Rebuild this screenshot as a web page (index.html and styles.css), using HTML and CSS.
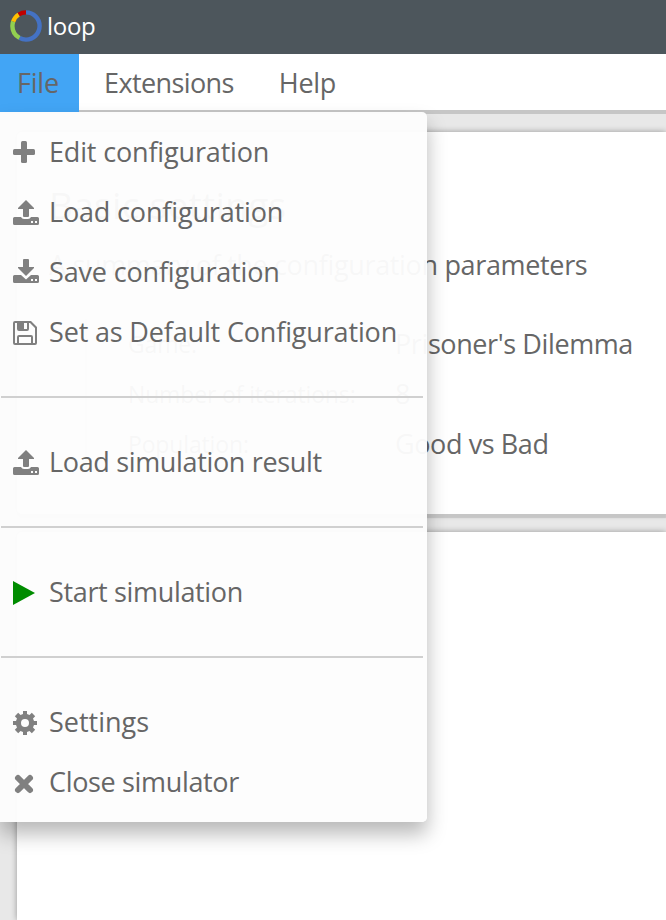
FILE: index.html
```html
<!DOCTYPE html>
<html lang="en">
<head>
<meta charset="utf-8">
<title>loop</title>
<link rel="stylesheet" href="styles.css">
</head>
<body>
<header class="titlebar">
  <svg class="logo" width="32" height="32" viewBox="0 0 32 32" fill="none" stroke-width="4.4">
    <circle cx="16" cy="16" r="13.6" stroke="#4472c4" pathLength="100" stroke-dasharray="58 42" stroke-dashoffset="25"/>
    <circle cx="16" cy="16" r="13.6" stroke="#92d050" pathLength="100" stroke-dasharray="22.500 77.500" stroke-dashoffset="-33"/>
    <circle cx="16" cy="16" r="13.6" stroke="#ffc000" pathLength="100" stroke-dasharray="10.500 89.500" stroke-dashoffset="-55.500"/>
    <circle cx="16" cy="16" r="13.6" stroke="#c00000" pathLength="100" stroke-dasharray="9 91" stroke-dashoffset="-66"/>
  </svg>
  <span class="brand">loop</span>
</header>
<nav class="menubar">
  <div class="tab tab-file active"><span>File</span>
    <div class="menu">
      <div class="item"><svg class="icon" viewBox="0 0 28 28"><rect x="0" y="11" width="22" height="6" rx="1.500"/><rect x="8" y="3" width="6" height="22" rx="1.500"/></svg><span class="snug">Edit configuration</span></div>
      <div class="item"><svg class="icon" viewBox="0 0 28 28"><path d="M13 2l8 8v1h-5v7q0 1-1 1h-4q-1 0-1-1v-7H5v-1z"/><path fill-rule="evenodd" d="M1.500 19H8q1 2 3 2h4q2 0 3-2h6.500q1.500 0 1.500 1.500v5q0 1.500-1.500 1.500h-23Q0 27 0 25.500v-5Q0 19 1.500 19zM18 23v2h2v-2zM22 23v2h2v-2z"/></svg><span class="snug">Load configuration</span></div>
      <div class="item"><svg class="icon" viewBox="0 0 28 28"><path d="M11 1h4q1 0 1 1v7h5v1l-8 8-8-8V9h5V2q0-1 1-1z"/><path fill-rule="evenodd" d="M1.500 17H8l5 4.500 5-4.500h6.500q1.500 0 1.500 1.500v5q0 1.500-1.500 1.500h-23Q0 25 0 23.500v-5Q0 17 1.500 17zM18 21v2h2v-2zM22 21v2h2v-2z"/></svg><span class="snug">Save configuration</span></div>
      <div class="item"><svg class="icon" viewBox="0 0 28 28"><path fill-rule="evenodd" d="M2 3h16l6 6v16q0 2-2 2H2q-2 0-2-2V5q0-2 2-2zM2 5v20h2v-6q0-2 2-2h12q2 0 2 2v6h2V10l-5-5h-1v6q0 2-2 2H6q-2 0-2-2V5zM11 5v6h3V5zM6 19v6h12v-6z"/></svg><span class="snug">Set as Default Configuration</span></div>
      <hr>
      <div class="item"><svg class="icon" viewBox="0 0 28 28"><path d="M13 2l8 8v1h-5v7q0 1-1 1h-4q-1 0-1-1v-7H5v-1z"/><path fill-rule="evenodd" d="M1.500 19H8q1 2 3 2h4q2 0 3-2h6.500q1.500 0 1.500 1.500v5q0 1.500-1.500 1.500h-23Q0 27 0 25.500v-5Q0 19 1.500 19zM18 23v2h2v-2zM22 23v2h2v-2z"/></svg><span class="tight">Load simulation result</span></div>
      <hr>
      <div class="item"><svg class="icon play" viewBox="0 0 28 28"><path d="M0 3l22 12L0 27z"/></svg><span class="tight">Start simulation</span></div>
      <hr>
      <div class="item"><svg class="icon" viewBox="0 0 28 28"><path fill-rule="evenodd" d="M10 3h4v3l2.500 1 2.300-2.200 3.400 3.400L20 10.500l1 2.500h3v4h-3l-1 2.500 2.200 2.300-3.400 3.400L16.500 23 14 24v3h-4v-3l-2.500-1-2.300 2.200-3.400-3.400L4 19.500 3 17H0v-4h3l1-2.500-2.200-2.300 3.400-3.400L7.500 7 10 6zM12 11a4 4 0 1 0 0 8a4 4 0 1 0 0-8z"/></svg><span>Settings</span></div>
      <div class="item"><svg class="icon cross" viewBox="0 0 28 28"><path d="M5 10l12 12M17 10L5 22"/></svg><span class="tight">Close simulator</span></div>
    </div>
  </div>
  <div class="tab"><span class="tab-label">Extensions</span></div>
  <div class="tab"><span class="tight">Help</span></div>
</nav>
<main class="page">
  <section class="card summary">
    <h1>Basic settings</h1>
    <p class="tight">A summary of the configuration parameters</p>
    <dl>
      <dt>Game:</dt><dd>Prisoner's Dilemma</dd>
      <dt>Number of iterations:</dt><dd>8</dd>
      <dt>Population:</dt><dd>Good vs Bad</dd>
    </dl>
  </section>
  <section class="card rest"></section>
</main>
</body>
</html>
```
FILE: styles.css
```css
* { box-sizing: border-box; }
body { margin: 0; width: 666px; height: 920px; overflow: hidden; display: flex; flex-direction: column; background: #e8e8e8; color: #666; font: 27px/40px "Open Sans", "Noto Sans", sans-serif; white-space: nowrap; }
.titlebar { height: 54px; flex: none; display: flex; align-items: center; padding: 0 0 3px 10px; background: #4d565c; color: #fff; }
.brand { margin-left: 5px; font-size: 24px; padding-top: 1px; letter-spacing: -.3px; }
.menubar { position: relative; z-index: 2; flex: none; display: flex; height: 58px; background: #fff; box-shadow: inset 0 -2px #c6c6c6, 0 2px #c6c6c6; }
.tab { padding: 9px 22px 0 23px; }
.tab-file { width: 79px; padding-left: 17px; margin-right: 2px; letter-spacing: -.2px; }
.tab-label { letter-spacing: -.6px; }
.active { background: #42a5f5; }
.menu { position: absolute; left: 0; top: 58px; width: 427px; height: 710px; padding: 10px 0; background: rgba(253, 253, 253, .96); border-radius: 0 5px 5px 0; box-shadow: 0 12px 20px rgba(0, 0, 0, .28); letter-spacing: 0; }
.item { height: 60px; display: flex; align-items: center; padding-left: 13px; }
.icon { width: 28px; height: 28px; margin-right: 8px; flex: none; fill: #808080; }
.play { fill: #008c00; }
.cross { fill: none; stroke: #808080; stroke-width: 6; stroke-linecap: round; }
.snug { letter-spacing: -.16px; }
.tight { letter-spacing: -.34px; }
hr { height: 2px; border: 0; margin: 34px 4px 34px 1px; background: #d0d0d0; }
.page { flex: 1; display: flex; flex-direction: column; gap: 18px; padding: 20px 0 0 17px; }
.card { background: #fff; border-radius: 5px 0 0 5px; box-shadow: 0 4px 1px #c6c6c6, 0 0 6px rgba(0, 0, 0, .35); }
.summary { height: 382px; padding: 46px 0 0 32px; flex: none; }
.rest { flex: 1; border-radius: 5px 0 0; }
h1 { margin: 0; font-size: 37px; font-weight: 400; line-height: 54px; letter-spacing: .3px; }
p { margin: 13px 0 0; }
dl { display: grid; grid-template-columns: 267px 1fr; grid-auto-rows: 50px; align-items: center; margin: 34px 0 0 36px; padding-left: 41px; border-left: 2px solid #ddd; }
dt { font-size: 23px; letter-spacing: -.15px; }
dd { margin: 0; letter-spacing: -.4px; }
```
